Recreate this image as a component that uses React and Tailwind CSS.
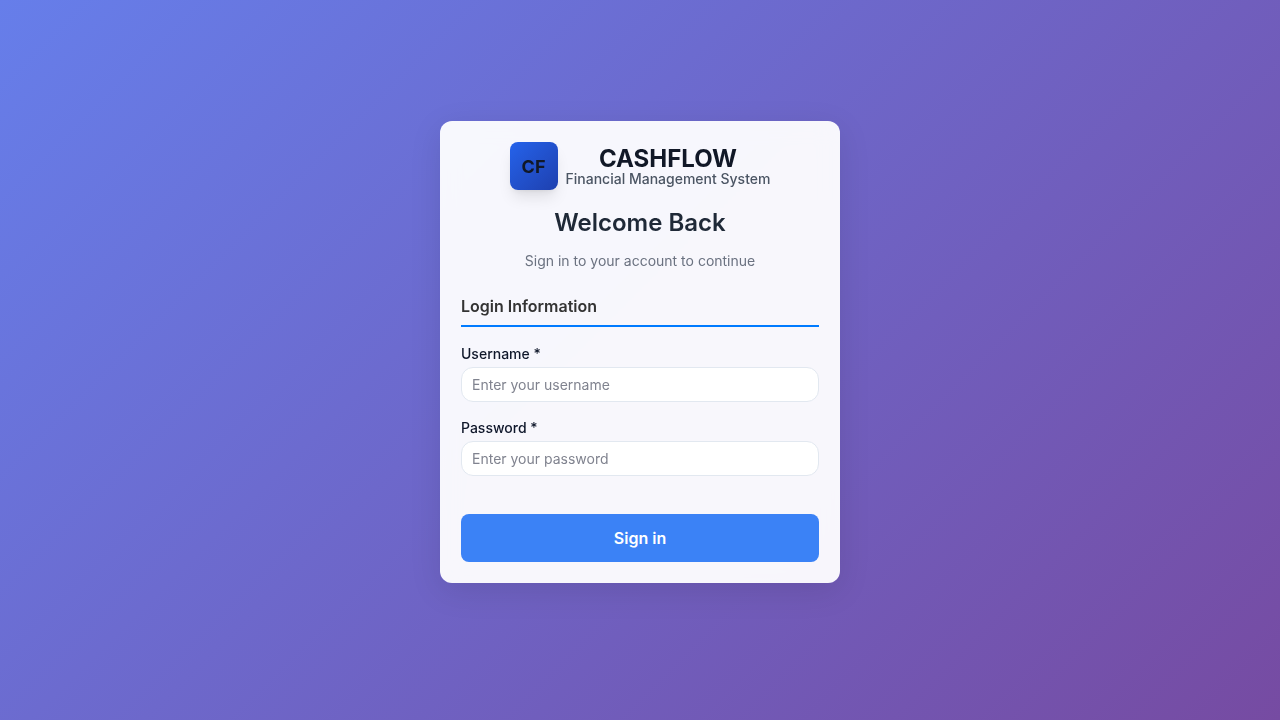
function Field({ id, label, type, placeholder }) {
  return (
    <div className="flex flex-col gap-[3px]">
      <label htmlFor={id} className="text-sm leading-[21px] font-medium text-[#0f172a]">
        {label} *
      </label>
      <input
        id={id}
        type={type}
        placeholder={placeholder}
        className="h-[35px] w-full rounded-xl border border-[#e2e8f0] bg-white px-2.5 text-sm text-[#0f172a] outline-none placeholder:text-[#80838f]"
      />
    </div>
  );
}

export default function App() {
  return (
    <main className="flex min-h-screen items-center justify-center bg-[linear-gradient(135deg,#667eea_0%,#764ba2_100%)] p-5 pb-9 font-[Inter,sans-serif] antialiased">
      <section className="w-full max-w-[400px] rounded-xl bg-white/95 p-[21px] shadow-[0_8px_32px_rgba(0,0,0,0.1)] backdrop-blur-[10px]">
        <header className="text-center">
          <div className="flex items-center justify-center gap-2">
            <div className="flex size-12 items-center justify-center rounded-lg bg-linear-to-br from-[#2563eb] to-[#1e40af] text-lg leading-[29px] font-bold text-[#111827] shadow-lg">
              CF
            </div>
            <div>
              <div className="text-2xl leading-6 font-bold text-[#111827]">CASHFLOW</div>
              <div className="text-sm leading-[15px] font-medium text-[#4b5563]">Financial Management System</div>
            </div>
          </div>
          <h1 className="mt-[17px] text-2xl leading-8 font-semibold text-[#1f2937]">Welcome Back</h1>
          <p className="mt-3 text-sm leading-5 text-[#6b7280]">Sign in to your account to continue</p>
        </header>
        <form className="mt-[23px]" onSubmit={(e) => e.preventDefault()}>
          <h2 className="border-b-2 border-[#007bff] pb-[7px] text-base leading-6 font-semibold text-[#333333]">
            Login Information
          </h2>
          <div className="mt-4 flex flex-col gap-[15px]">
            <Field id="username" label="Username" type="text" placeholder="Enter your username" />
            <Field id="password" label="Password" type="password" placeholder="Enter your password" />
          </div>
          <button type="submit" className="mt-[38px] h-12 w-full rounded-lg bg-[#3b82f6] text-base font-semibold text-white">
            Sign in
          </button>
        </form>
      </section>
    </main>
  );
}
